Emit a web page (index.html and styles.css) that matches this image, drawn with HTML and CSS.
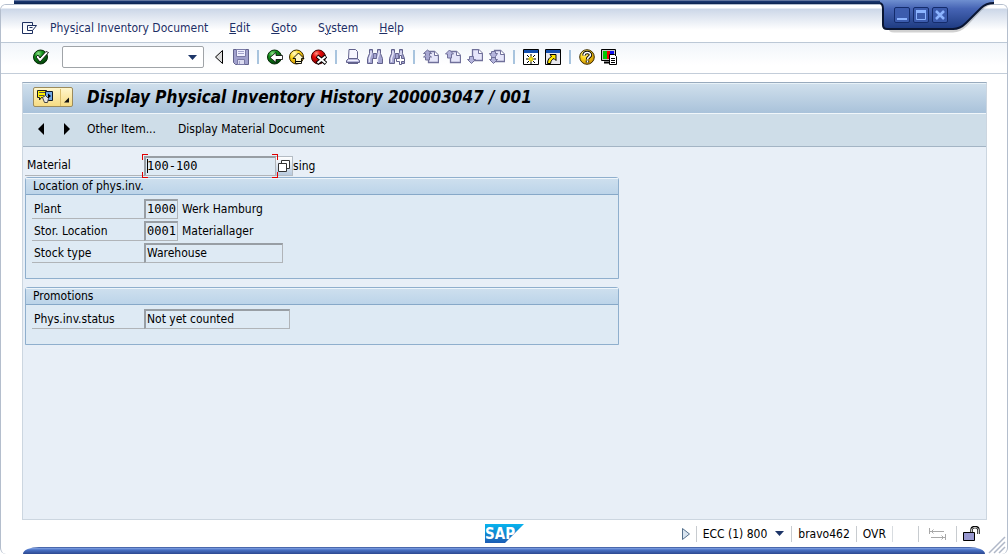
FILE: index.html
```
<!DOCTYPE html>
<html lang="en">
<head>
<meta charset="utf-8">
<title>Display Physical Inventory History</title>
<link rel="stylesheet" href="styles.css">
</head>
<body>
<svg class="defs" width="0" height="0" aria-hidden="true">
  <defs>
    <radialGradient id="green" cx=".35" cy=".25" r=".8"><stop offset="0" stop-color="#8fe08a"/><stop offset=".35" stop-color="#12901a"/><stop offset="1" stop-color="#003a08"/></radialGradient>
    <radialGradient id="yellow" cx=".35" cy=".25" r=".8"><stop offset="0" stop-color="#fffbd0"/><stop offset=".4" stop-color="#ffd91c"/><stop offset="1" stop-color="#c88a00"/></radialGradient>
    <radialGradient id="red" cx=".35" cy=".25" r=".8"><stop offset="0" stop-color="#ff9080"/><stop offset=".35" stop-color="#e80808"/><stop offset="1" stop-color="#700000"/></radialGradient>
    <linearGradient id="tab" x2="0" y2="1"><stop offset="0" stop-color="#6f8fd0"/><stop offset=".3" stop-color="#4664b4"/><stop offset="1" stop-color="#1d3a80"/></linearGradient>
    <linearGradient id="sap" x2="0" y2="1"><stop offset="0" stop-color="#08b4ee"/><stop offset="1" stop-color="#1c5cb4"/></linearGradient>
    <symbol id="bino" viewBox="0 0 16 16"><path d="M2.500.5h3v3l1 1h3l1-1v-3h3v4l2 5v5h-5v-5h-5v5h-5v-5l2-5z" fill="#a4a4d0" stroke="#62628c"/><path d="M4 2v3L2.500 9v4M12 2v3l-1.500 4v4" fill="none" stroke="#e8e8fa" stroke-width="1.400"/><path d="M6.500 5v4M9.500 5v4" stroke="#70709c"/></symbol>
    <symbol id="page" viewBox="0 0 16 16"><path d="M5.500 2.500h6l4 4v7h-10z" fill="#e6e6fa" stroke="#70709a" stroke-width="1.300"/><path d="M11.500 2.500v4h4" fill="#fff" stroke="#70709a"/></symbol>
  </defs>
</svg>

<div class="window">
  <header class="menubar">
    <button class="icon-btn" aria-label="System menu"><svg width="16" height="12" viewBox="0 0 16 12" fill="none" stroke="#1d2f5f"><path d="M10.500 3V.5H.5v11h10V8.500"/><path d="M5.500 3.500h9l-4 5h-5zM10.500 5.500h-3"/></svg></button>
    <nav class="menus">
      <button>Phys<u>i</u>cal Inventory Document</button>
      <button><u>E</u>dit</button>
      <button><u>G</u>oto</button>
      <button>S<u>y</u>stem</button>
      <button><u>H</u>elp</button>
    </nav>
  </header>

  <div class="toolbar">
    <button class="icon-btn" aria-label="Enter"><svg class="ic" viewBox="0 0 16 16"><circle cx="7.500" cy="8" r="7" fill="url(#green)" stroke="#062a08"/><path d="M3 8l4 5 8.500-9.500-2.500-1-6 6.500-2-3z" fill="#fff" stroke="#000" stroke-width=".8"/></svg></button>
    <div class="command">
      <input type="text" aria-label="Command field">
      <button aria-label="Command history"><svg width="9" height="5"><path d="M0 0h9L4.500 5z" fill="#1d3568"/></svg></button>
    </div>
    <button class="icon-btn" aria-label="Collapse command field"><svg class="ic" viewBox="0 0 16 16"><path d="M11.500 1.500v13l-7-6.500z" fill="#ddd" stroke="#000"/></svg></button>
    <button class="icon-btn" aria-label="Save"><svg class="ic" viewBox="0 0 16 16"><path d="M.5.5h15v15h-13l-2-2z" fill="#a0a0cc" stroke="#62628c"/><path d="M3.500.5h9v7h-9z" fill="#f0f0ff" stroke="#7a7aa6"/><path d="M4.500 10.500h7v5h-7z" fill="#dcdcf0" stroke="#7a7aa6"/><path d="M6.500 12v3M5 2.500h6M5 4.500h6" stroke="#a4a4cc"/></svg></button>
    <span class="sep"></span>
    <button class="icon-btn" aria-label="Back"><svg class="ic" viewBox="0 0 16 16"><circle cx="7.500" cy="8" r="7" fill="url(#green)" stroke="#062a08"/><path d="M3 8.500l6-5v3h6.500v4H9v3z" fill="#fff" stroke="#000" stroke-width=".8"/></svg></button>
    <button class="icon-btn" aria-label="Exit"><svg class="ic" viewBox="0 0 16 16"><circle cx="7.500" cy="8" r="7" fill="url(#yellow)" stroke="#3c2c00"/><path d="M9.500 4l5.500 5.500h-2.500v5h-6v-5H4z" fill="#fff8c8" stroke="#000" stroke-width=".9"/><path d="M7 12.500h5" stroke="#000"/></svg></button>
    <button class="icon-btn" aria-label="Cancel"><svg class="ic" viewBox="0 0 16 16"><circle cx="7.500" cy="8" r="7" fill="url(#red)" stroke="#400"/><path d="M6 7l9 7.500M15 7l-9 7.500" stroke="#000" stroke-width="4"/><path d="M6.500 7.500l8 6.500M14.500 7.500l-8 6.500" stroke="#fff" stroke-width="2"/></svg></button>
    <span class="sep"></span>
    <button class="icon-btn" aria-label="Print"><svg class="ic" viewBox="0 0 16 16" fill="#f6f6ff" stroke="#62628c"><path d="M4 .5h6.500l2 2v7h-9z"/><path d="M1.500 11.500l2-2h9l2 2v2h-13z" fill="#b8b8dc"/><path d="M3 14.500h10"/><path d="M3 11.500h10" stroke="#f2f2ff"/></svg></button>
    <button class="icon-btn" aria-label="Find"><svg class="ic"><use href="#bino"/></svg></button>
    <button class="icon-btn" aria-label="Find next"><svg class="ic" viewBox="0 0 16 16"><use href="#bino"/><path d="M10.500 6.500h2v3h3v3h-3v3h-2v-3h-3v-3h3z" fill="#fff" stroke="#62628c"/></svg></button>
    <span class="sep"></span>
    <button class="icon-btn" aria-label="First page"><svg class="ic" viewBox="0 0 16 16"><use href="#page"/><path d="M4.500 1l4 3.500h-2v2l2 1.500h-2v3h-4V8h-2l2-1.500v-2h-2z" fill="#a8a8d2" stroke="#70709a"/></svg></button>
    <button class="icon-btn" aria-label="Previous page"><svg class="ic" viewBox="0 0 16 16"><use href="#page"/><path d="M.5 5l4-4 4 4h-2v4h-4V5z" fill="#b4b4dc" stroke="#70709a"/></svg></button>
    <button class="icon-btn" aria-label="Next page"><svg class="ic" viewBox="0 0 16 16"><use href="#page" y="-2"/><path d="M.5 10.500h2v-3h4v3h2l-4 4z" fill="#b4b4dc" stroke="#70709a"/></svg></button>
    <button class="icon-btn" aria-label="Last page"><svg class="ic" viewBox="0 0 16 16"><use href="#page" y="-1"/><path d="M2.500 2.500h4v2h2l-2 3v3h2l-4 4-4-4h2v-3l-2-3h2z" fill="#b4b4dc" stroke="#70709a"/><path d="M2 8.500h5" stroke="#70709a"/></svg></button>
    <span class="sep"></span>
    <button class="icon-btn" aria-label="New session"><svg class="ic" viewBox="0 0 16 16"><path d="M.5.5h15v15H.5z" fill="#fff" stroke="#000"/><path d="M1 1h14v3H1z" fill="#1450b0"/><path d="M8 5v10M3 10h10M4 6l8 8M12 6l-8 8" stroke="#000"/><path d="M8 7v6M5 10h6M6 8l4 4M10 8l-4 4" stroke="#ffe800"/></svg></button>
    <button class="icon-btn" aria-label="Create shortcut"><svg class="ic" viewBox="0 0 16 16"><path d="M.5.5h15v15H.5z" fill="#e8e8ee" stroke="#000"/><path d="M1 1h14v3H1z" fill="#1450b0"/><path d="M5 5.500h6v6l-2-2c-2 1-3 2-3.500 5H2.500c0-4 2-6 4-7z" fill="#ffe800" stroke="#000"/></svg></button>
    <span class="sep"></span>
    <button class="icon-btn" aria-label="Help"><svg class="ic" viewBox="0 0 16 16" fill="none"><circle cx="8" cy="8" r="7.300" fill="url(#yellow)" stroke="#3c2c00"/><path d="M5 6.500C5 2.500 11.500 2.500 11.500 6c0 2-3 2-3 4.500M8.500 11.500v2" stroke="#000" stroke-width="3.400"/><path d="M5 6.500C5 2.500 11.500 2.500 11.500 6c0 2-3 2-3 4.500M8.500 11.500v2" stroke="#fff" stroke-width="1.600"/></svg></button>
    <button class="icon-btn" aria-label="Customize local layout"><svg class="ic" viewBox="0 0 16 16"><path d="M.5.500h14v11H.5z" fill="#c8c8c8" stroke="#000"/><path d="M2 2h4v8H2z" fill="#00c800"/><path d="M6 2h3v8H6z" fill="#f00000"/><path d="M9 2h4v8H9z" fill="#1010f0"/><path d="M3 13.500h6" stroke="#000" stroke-width="2"/><path d="M8.500 5.500h5l2 2v8h-7z" fill="#fff" stroke="#000"/><path d="M10 9.500h4M10 11.500h4M10 13.500h4" stroke="#000"/></svg></button>
  </div>

  <main class="screen">
    <div class="titlebar">
      <button class="services" aria-label="Services for object"><svg width="40" height="20" viewBox="0 0 40 20"><path d="M4.500 3.500h9v7h-5l-2 2.500v-2.500h-2z" fill="#fff000" stroke="#1c1c1c"/><path d="M6 5.500h6M6 8.500h5" stroke="#555"/><path d="M12.500 4.500h7v9h-7z" fill="#70a8e8" stroke="#101828"/><path d="M15 6.500l3 2.500-3 2.500z" fill="#000"/><path d="M9.500 10.500l3-2 3 3-1 4h-3z" fill="#e8e8e8" stroke="#444"/><path d="M27.500 2v17" stroke="#d9bd6c"/><path d="M36 10.500v5h-5z" fill="#111"/></svg></button>
      <h1>Display Physical Inventory History 200003047 / 001</h1>
    </div>
    <div class="appbar">
      <div class="arrows">
        <button class="icon-btn" aria-label="Previous item"><svg width="6" height="12"><path d="M6 0v12L0 6z"/></svg></button>
        <button class="icon-btn" aria-label="Next item"><svg width="6" height="12"><path d="M0 0v12l6-6z"/></svg></button>
      </div>
      <button class="text-btn">Other Item...</button>
      <button class="text-btn">Display Material Document</button>
    </div>

    <form class="form">
      <div class="row material">
        <label for="material">Material</label>
        <span class="focus"><input class="mono wide" id="material" value="100-100" readonly><i class="caret"></i></span>
        <button type="button" class="match" aria-label="Possible entries"><svg width="12" height="12" viewBox="0 0 12 12" fill="#fff" stroke="#333"><path d="M3.500.5h8v8h-8z"/><path d="M.5 3.500h8v8h-8z"/></svg></button>
        <span>sing</span>
      </div>

      <fieldset class="group">
        <legend>Location of phys.inv.</legend>
        <div class="row"><label for="plant">Plant</label><input class="mono code" id="plant" value="1000" readonly><span class="desc">Werk Hamburg</span></div>
        <div class="row"><label for="sloc">Stor. Location</label><input class="mono code" id="sloc" value="0001" readonly><span class="desc">Materiallager</span></div>
        <div class="row"><label for="stock">Stock type</label><input class="medium" id="stock" value="Warehouse" readonly></div>
      </fieldset>

      <fieldset class="group">
        <legend>Promotions</legend>
        <div class="row"><label for="status">Phys.inv.status</label><input class="long" id="status" value="Not yet counted" readonly></div>
      </fieldset>
    </form>
  </main>

  <footer class="status">
    <svg class="logo" width="39" height="19" viewBox="0 0 39 19" role="img" aria-label="SAP"><path d="M0 0h39L20 19H0z" fill="url(#sap)"/><text x="0" y="15">SAP</text></svg>
    <div class="info">
      <button class="icon-btn" aria-label="Expand status"><svg width="8" height="12" viewBox="0 0 8 12"><path d="M.5.5v11l7-5.500z" fill="#d8e4f0" stroke="#55708c"/></svg></button>
      <button class="cell system">ECC (1) 800 <svg width="9" height="5"><path d="M0 0h9L4.500 5z" fill="#1d3568"/></svg></button>
      <span class="cell host">bravo462</span>
      <span class="cell mode">OVR</span>
      <span class="cell blank"></span>
      <span class="cell transfer"><svg width="17" height="12" viewBox="0 0 17 12" fill="none" stroke="#a8a8a8"><path d="M.5 0v6M1 3.500h14M4.500 1.500l-2 2 2 2M16.500 6v6M2 9.500h14M12.500 7.500l2 2-2 2"/></svg></span>
      <span class="cell lock"><svg width="17" height="15" viewBox="0 0 17 15"><path d="M8.500 7V4c0-4 7-4 7 0v4" fill="none" stroke="#000" stroke-width="2.400"/><path d="M8.500 7V4c0-3.500 7-3.500 7 0v4" fill="none" stroke="#fff" stroke-width=".8"/><path d="M.5 6.500h11v8H.5z" fill="#9898d0" stroke="#000"/></svg></span>
    </div>
    <svg class="grip" width="18" height="18" stroke="#b0b8c8" stroke-width="1.500"><path d="M1 17L17 1M6 17L17 6M11 17l6-6"/></svg>
  </footer>
</div>

<div class="top-strip"></div>
<div class="bottom-strip"></div>
<div class="window-controls">
  <svg class="shape" width="114" height="36" viewBox="0 0 114 36"><path d="M2 2q8 0 8 8v18q0 3 4 3h59q7 0 13-6l15-16q7-6 13-6" fill="none" stroke="#000" stroke-opacity=".18" stroke-width="3"/><path d="M0 0h114v3q-8 0-13 5L86 23q-6 6-13 6H7q-4 0-4-4V9q0-6-3-6z" fill="url(#tab)"/><path d="M0 3q3 1 3 6v16q0 4 4 4h66q7 0 13-6l15-15q5-5 13-5" fill="none" stroke="#0a1634" stroke-width="2"/></svg>
  <div class="buttons">
    <button aria-label="Minimize"><svg width="14" height="14"><path d="M2 11h10" stroke="#8cb4ff" stroke-width="2"/></svg></button>
    <button aria-label="Maximize"><svg width="14" height="14" fill="none" stroke="#8cb4ff"><path d="M2.500 2.500h9v9h-9z"/><path d="M2 3.500h10" stroke-width="3"/></svg></button>
    <button aria-label="Close"><svg width="14" height="14" stroke="#8cb4ff" stroke-width="2.500"><path d="M3 3l8 8M11 3l-8 8"/></svg></button>
  </div>
</div>
</body>
</html>
```
FILE: styles.css
```
* { box-sizing: border-box; }

body {
  margin: 0;
  min-height: 100vh;
  display: flex;
  background: #fff;
  color: #000;
  font: 12px/16px "DejaVu Sans Condensed", Tahoma, "DejaVu Sans", sans-serif;
}

.defs { position: absolute; }

button {
  margin: 0;
  padding: 0;
  border: 0;
  background: none;
  color: inherit;
  font: inherit;
}

svg { display: block; }

input { font: inherit; color: inherit; }

.window {
  flex: 1;
  display: flex;
  flex-direction: column;
  margin-top: 4px;
  border: 1px solid #b4becd;
  border-bottom: 0;
  border-radius: 6px;
  background: #fff;
}

.menubar {
  display: flex;
  align-items: center;
  gap: 12px;
  height: 38px;
  padding: 8px 20px 0 21px;
  border-bottom: 1px solid #bcc8d6;
  border-radius: 5px 5px 0 0;
  background: linear-gradient(#fff 0, #fff 3px, #ccd7e8 4px, #fff 25px);
  color: #1d2f66;
}

.menus { display: flex; gap: 21px; }

.toolbar {
  display: flex;
  align-items: center;
  gap: 6px;
  height: 31px;
  padding: 0 32px 2px;
  border-bottom: 1px solid #c3cdd9;
  background: linear-gradient(#f1f5fa, #fff 22px);
}

.ic { width: 16px; height: 16px; }

.sep { width: 6px; height: 14px; background: linear-gradient(#a8c4de, #a8c4de) center / 2px 100% no-repeat; }

.command {
  display: flex;
  align-items: center;
  width: 142px;
  height: 22px;
  margin: 0 1px 0 7px;
  border: 1px solid #a0a4a8;
  border-radius: 2px;
  background: #fff;
}

.command input { flex: 1; min-width: 0; border: 0; background: none; outline: 0; }
.command button { padding: 0 6px; }

.screen {
  flex: 1;
  margin: 8px 20px 0 21px;
  border: 1px solid #ccd6e0;
  border-top-color: #98aabd;
  background: #e8eff7;
}

.titlebar {
  display: flex;
  align-items: center;
  gap: 14px;
  height: 30px;
  padding: 0 0 4px 10px;
  border-top: 1px solid #e8f2f8;
  background: linear-gradient(#cfdfec, #a9c2da);
}

.titlebar h1 { margin: 0; font-size: 17px; line-height: 20px; font-style: italic; font-weight: bold; }

.services {
  border: 1px solid #9c8b5c;
  border-radius: 2px;
  background: linear-gradient(#fff6cc, #f7dc83);
  overflow: hidden;
}

.services svg { margin: -1px; }

.appbar {
  display: flex;
  align-items: center;
  gap: 22px;
  height: 34px;
  padding: 0 10px 2px 15px;
  border-top: 1px solid #f0f6fa;
  border-bottom: 1px solid #a3b4c4;
  background: #cedde8;
}

.arrows { display: flex; gap: 20px; margin-right: -5px; }

.form { padding: 8px 2px; }

.row { display: flex; align-items: center; height: 20px; }

.row label {
  align-self: stretch;
  width: 112px;
  padding: 2px 2px 0;
  border-bottom: 1px solid #b0b4b8;
}

.material { height: 21px; margin-bottom: 1px; }
.material label { width: 119px; }

.row input {
  height: 20px;
  padding: 0 1px 1px;
  border: 2px solid #b0b4b8;
  border-right-width: 1px;
  border-bottom-width: 1px;
  border-color: #989ea4 #b0b4b8 #b0b4b8 #989ea4;
  background: #deeaf4;
  outline: 0;
}

.row .mono { font-family: "DejaVu Sans Mono", monospace; }
.wide { width: 132px; }
.code { width: 34px; }
.medium { width: 139px; }
.long { width: 146px; }
.desc { margin-left: 4px; }

.focus { position: relative; display: flex; }

.focus::before {
  content: "";
  position: absolute;
  inset: -2px;
  pointer-events: none;
  --r: linear-gradient(#e00000, #e00000);
  background:
    var(--r) 0 0 / 6px 1px, var(--r) 0 0 / 1px 6px,
    var(--r) 100% 0 / 6px 1px, var(--r) 100% 0 / 1px 6px,
    var(--r) 0 100% / 6px 1px, var(--r) 0 100% / 1px 6px,
    var(--r) 100% 100% / 6px 1px, var(--r) 100% 100% / 1px 6px;
  background-repeat: no-repeat;
}

.caret { position: absolute; left: 3px; top: 3px; width: 1px; height: 14px; background: #000; }

.match {
  padding: 3px 2px;
  border: 1px solid #b4bcc4;
  border-left: 0;
  background: linear-gradient(#fff, #b8cade);
}

.group {
  width: 594px;
  max-width: 100%;
  margin: 0 0 8px;
  padding: 4px 6px 15px;
  border: 1px solid #8fafcd;
  border-radius: 3px 3px 0 0;
  background: #deeaf4;
}

.group legend {
  float: left;
  width: calc(100% + 12px);
  margin: -4px -6px 4px;
  padding: 0 7px;
  border-bottom: 1px solid #86a8c8;
  border-top: 1px solid #eef5fb;
  background: linear-gradient(#cddfee, #bcd4e9);
  line-height: 15px;
}

.group .row { clear: both; margin-bottom: 2px; }
.group .row:last-child { margin-bottom: 0; }

.status {
  position: relative;
  display: grid;
  grid-template-columns: 1fr auto 1fr;
  align-items: center;
  height: 34px;
  padding: 0 27px 7px;
}

.logo { grid-column: 2; }
.logo text { font: bold 15px "DejaVu Sans Condensed", sans-serif; fill: #fff; }

.info { display: flex; align-items: center; justify-content: flex-end; }

.cell {
  display: flex;
  align-items: center;
  height: 16px;
  border-left: 1px solid #c8ccd0;
}

.system { gap: 8px; margin-left: 6px; padding: 0 7px 0 6px; }
.host { padding: 0 6px; }
.mode { padding: 0 6px; }
.blank { width: 26px; border-left-color: #d8dce0; }
.transfer { padding: 0 10px; }
.lock { padding-left: 6px; }

.grip { position: absolute; right: 1px; bottom: 0; fill: none; }

.top-strip {
  position: absolute;
  top: 0;
  left: 14px;
  right: 14px;
  height: 4px;
  background: linear-gradient(#64779f 1px, #1c3a74 1px, #0d2450);
}

.bottom-strip {
  position: absolute;
  bottom: 0;
  left: 23px;
  right: 23px;
  height: 7px;
  border-radius: 16px 16px 0 0 / 7px 7px 0 0;
  background: linear-gradient(#4a68ac 1px, #84a4e4 1px, #4870c4 3px, #2c4890);
}

.window-controls { position: absolute; top: 0; right: 14px; width: 114px; }

.window-controls .buttons {
  position: absolute;
  top: 7px;
  left: 14px;
  display: flex;
  gap: 3px;
}

.window-controls button { border: 1px solid #142c6c; border-radius: 2px; background: #3c5cae; }
```
